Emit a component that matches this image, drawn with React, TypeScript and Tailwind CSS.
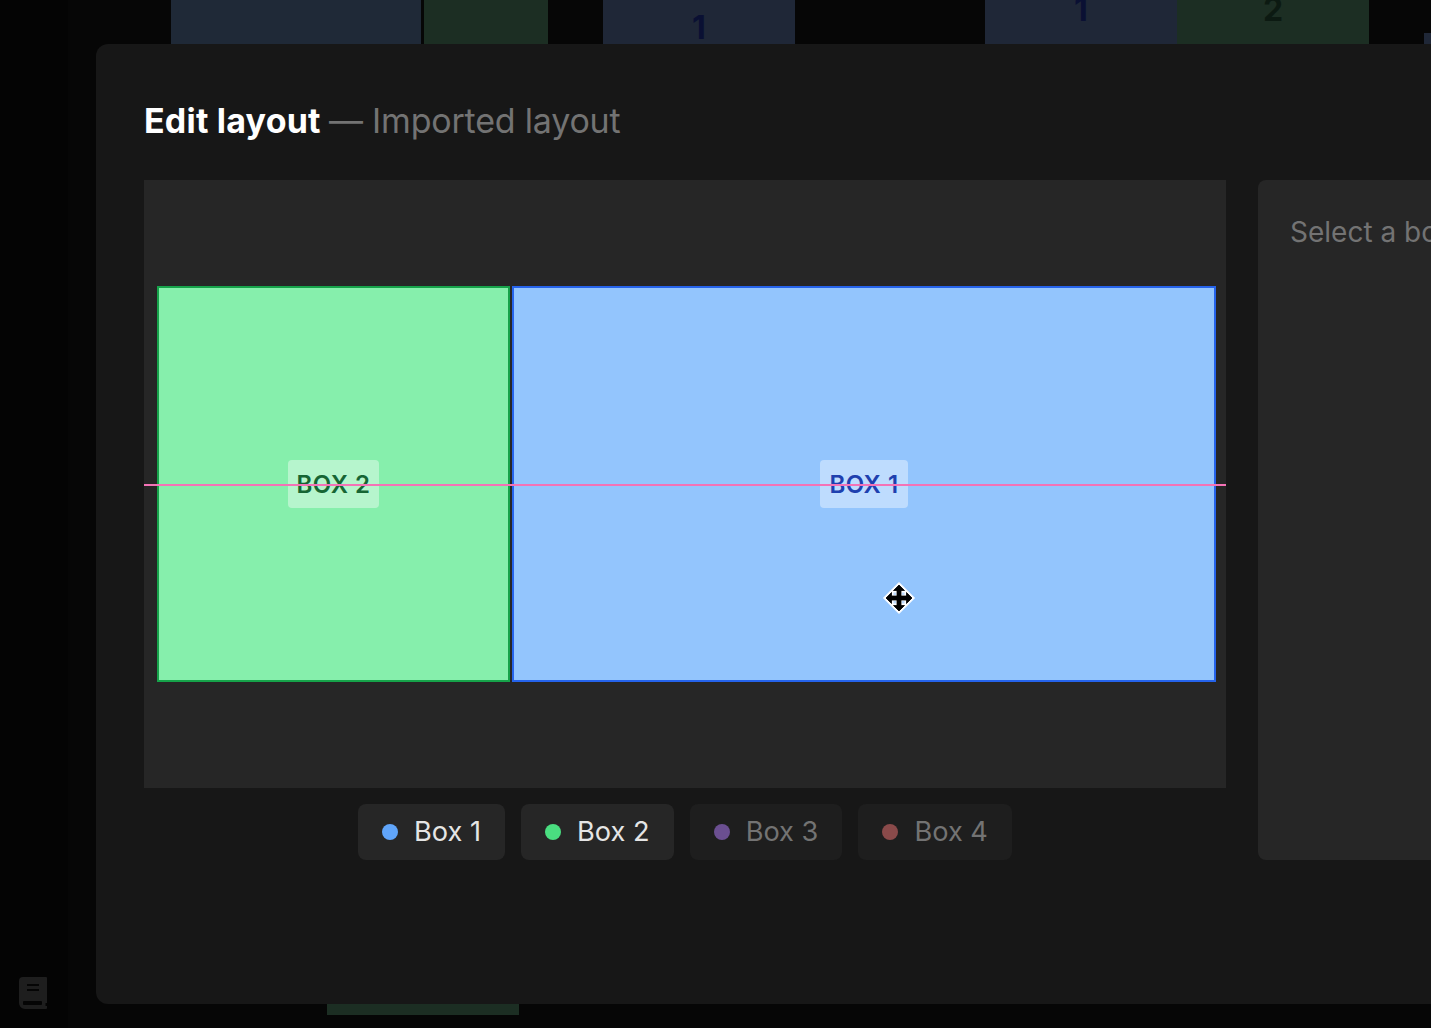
import React from 'react';

const chips = [
  { label: 'Box 1', dot: 'bg-[#60a5fa]', active: true },
  { label: 'Box 2', dot: 'bg-[#4ade80]', active: true },
  { label: 'Box 3', dot: 'bg-[#6b4f91]', active: false },
  { label: 'Box 4', dot: 'bg-[#8a4a4a]', active: false },
];

function MoveCursor() {
  return (
    <svg width="32" height="32" viewBox="0 0 32 32" className="absolute left-[739px] top-[402px]">
      <path d="M16 0.500 31.500 16 16 31.500 0.500 16z" fill="#fff" stroke="#fff" strokeLinejoin="round" />
      <path
        d="M16 3 21.500 8.500 18 8.500V14H23.500V10.500L29 16 23.500 21.500V18H18V23.500H21.500L16 29 10.500 23.500H14V18H8.500V21.500L3 16 8.500 10.500V14H14V8.500H10.500z"
        fill="#000"
        stroke="#000"
        strokeWidth="0.800"
      />
      <rect x="10.500" y="10.500" width="2.500" height="2.500" fill="#bfdcff" />
      <rect x="19" y="10.500" width="2.500" height="2.500" fill="#bfdcff" />
      <rect x="10.500" y="19" width="2.500" height="2.500" fill="#bfdcff" />
      <rect x="19" y="19" width="2.500" height="2.500" fill="#bfdcff" />
    </svg>
  );
}

function BookIcon() {
  return (
    <svg width="30" height="34" viewBox="0 0 30 34" className="block">
      <path
        d="M5 1h23a1 1 0 0 1 1 1v25h-1.500v3H29v2a1 1 0 0 1-1 1H7a6 6 0 0 1-6-6V5a4 4 0 0 1 4-4z"
        fill="#1e1e1e"
      />
      <rect x="9" y="8" width="12" height="2" fill="#050505" />
      <rect x="9" y="13" width="12" height="2" fill="#050505" />
      <rect x="5" y="25" width="19" height="4" rx="1" fill="#050505" />
    </svg>
  );
}

function LayoutBox({ label, className, labelClass }: { label: string; className: string; labelClass: string }) {
  return (
    <div className={`flex h-[396px] items-center justify-center border-2 ${className}`}>
      <span className={`flex h-12 items-center rounded bg-white/40 px-[9px] pt-[2px] text-[24px] font-semibold tracking-[0.5px] ${labelClass}`}>
        {label}
      </span>
    </div>
  );
}

export default function App() {
  return (
    <div className="relative flex h-screen w-full overflow-hidden bg-black font-['Inter',sans-serif]">
      {/* page behind the dialog, dimmed */}
      <div className="flex w-[68px] shrink-0 flex-col justify-end bg-[#040404] pb-[18px] pl-[18px]">
        <BookIcon />
      </div>
      <div className="flex flex-1 flex-col justify-between bg-[#060606] pb-[13px]">
        <div className="flex h-[44px] pl-[103px] text-[32px] font-bold leading-none">
          <div className="w-[250px] bg-[#1f2937]" />
          <div className="ml-[3px] w-[124px] bg-[#1c2e23]" />
          <div className="ml-[55px] flex w-[192px] items-end justify-center bg-[#1f2737] text-[#0a1033]">1</div>
          <div className="ml-[190px] flex w-[192px] justify-center bg-[#1f2737] text-[#0a1033]">
            <span className="-mt-[6px]">1</span>
          </div>
          <div className="flex w-[192px] justify-center bg-[#1c2e23] text-[#0c1a12]">
            <span className="-mt-[6px]">2</span>
          </div>
          <div className="ml-[55px] mt-[33px] w-[40px] bg-[#1f2737]" />
        </div>
        <div className="ml-[259px] h-[40px] w-[192px] bg-[#1c2e23]" />
      </div>

      {/* dialog */}
      <div className="absolute left-[96px] top-[44px] h-[960px] w-[1800px] rounded-xl bg-[#171717] px-12 pt-[52px]">
        <h2 className="h-[84px] text-[34px] font-bold leading-[50px] tracking-[0.2px] text-white">
          Edit layout <span className="font-normal tracking-[-0.2px] text-[#737373]">— Imported layout</span>
        </h2>
        <div className="flex gap-8">
          <div className="w-[1082px] shrink-0">
            <div className="relative flex h-[608px] items-center gap-[2px] bg-[#262626] pl-[13px]">
              <LayoutBox label="BOX 2" className="w-[353px] border-[#16a34a] bg-[#86efac]" labelClass="text-[#166534]" />
              <LayoutBox label="BOX 1" className="w-[704px] border-[#2563eb] bg-[#93c5fd]" labelClass="text-[#1e40af]" />
              <div className="absolute left-0 right-0 top-[304px] h-[2px] bg-[#f472b6]" />
              <MoveCursor />
            </div>
            <div className="mt-4 flex justify-center gap-4">
              {chips.map((chip) => (
                <div
                  key={chip.label}
                  className={`flex h-14 items-center gap-4 rounded-lg px-6 text-[27.2px] ${
                    chip.active ? 'bg-[#262626] text-[#e5e5e5]' : 'bg-[#1e1e1e] text-[#737373]'
                  }`}
                >
                  <span className={`h-4 w-4 rounded-full ${chip.dot}`} />
                  {chip.label}
                </div>
              ))}
            </div>
          </div>
          <div className="h-[680px] flex-1 rounded-lg bg-[#262626] p-8 text-[28px] leading-[40px] text-[#737373]">
            Select a box to edit
          </div>
        </div>
      </div>
    </div>
  );
}
